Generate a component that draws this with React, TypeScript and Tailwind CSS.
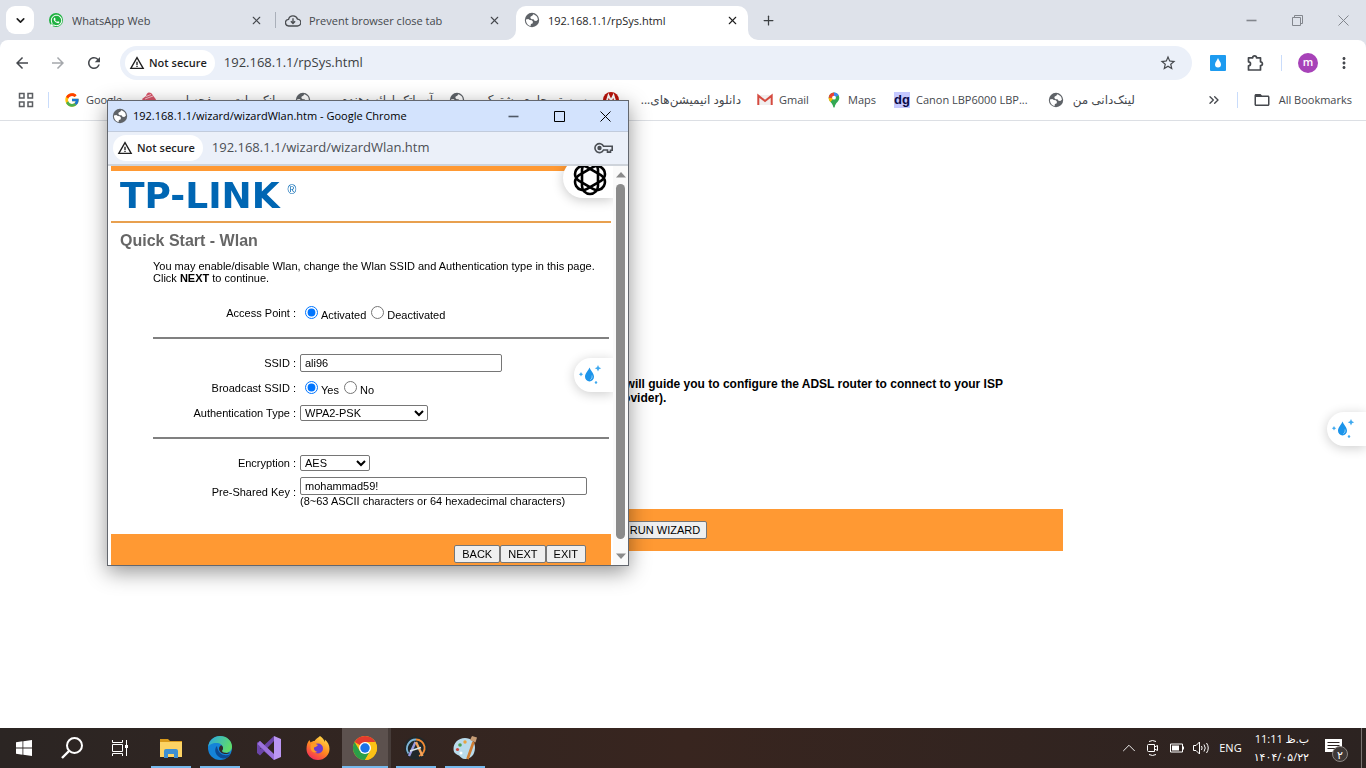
import type { ReactNode } from "react";
import { ChevronDown, ChevronUp, ChevronsRight, Plus, X } from "lucide-react";
import { FcGoogle } from "react-icons/fc";
import { FaWhatsapp } from "react-icons/fa";
import {
  MdArrowBack,
  MdArrowForward,
  MdFolderOpen,
  MdMoreVert,
  MdRefresh,
  MdStarBorder,
  MdWarningAmber,
} from "react-icons/md";

const uiFont = "font-['Open_Sans','DejaVu_Sans',sans-serif]";
const pageFont = "font-['Liberation_Sans',Arial,sans-serif]";

function GlobeIcon() {
  return (
    <svg width="16" height="16" viewBox="0 0 16 16" className="shrink-0" aria-hidden="true">
      <circle cx="8" cy="8" r="7.2" fill="#5f6368" />
      <path d="M9.2 2.2c1.8.4 3.400 1.600 4.200 3.300l.5 2.300-1.700 1.300-1.700-.3-1-1.500H7.600L6.300 6l.4-1.600 1.600-.6z" fill="#fff" />
      <path d="M1.900 7.400l2.400-.4 1.500 1 2 .3 1.200 1.400-.5 1.900-1.600.5-.3 1.900C3.900 13.600 1.900 10.600 1.900 7.400z" fill="#fff" />
    </svg>
  );
}

function CloudDownloadIcon() {
  return (
    <svg width="16" height="15" viewBox="0 0 18 16" fill="none" stroke="#4a4d51" strokeWidth="1.5" className="shrink-0" aria-hidden="true">
      <path d="M5 14.200H4.400A3.700 3.700 0 0 1 4 6.800 5.200 5.200 0 0 1 14 6.400a3.900 3.900 0 0 1-.2 7.800z" />
      <path d="M9 5.500v5.600M6.600 8.900 9 11.300l2.400-2.400" />
    </svg>
  );
}

function WhatsAppIcon() {
  return (
    <span className="flex size-4 shrink-0 items-center justify-center">
      <span className="flex size-[14px] items-center justify-center rounded-full bg-[#1fb141] text-white">
        <FaWhatsapp size={13} />
      </span>
    </span>
  );
}

function ExtensionIcon() {
  return (
    <svg width="18" height="18" viewBox="0 0 18 18" fill="none" stroke="currentColor" strokeWidth="1.700" strokeLinejoin="round" aria-hidden="true">
      <path d="M2.500 3.800H6.700a1.900 1.900 0 0 1 3.800 0H14.500v4a1.900 1.900 0 0 1 0 3.800v4.400H2.500v-4.200a2 2 0 0 0 0-4z" />
    </svg>
  );
}

function GmailIcon() {
  return (
    <svg width="16" height="16" viewBox="0 0 16 16" className="shrink-0" aria-hidden="true">
      <path d="M1 3h14v10H1z" fill="#f1efef" />
      <path d="M1.300 13V3.600L8 9l6.700-5.400V13" fill="none" stroke="#d54b40" strokeWidth="2" />
    </svg>
  );
}

function MapsIcon() {
  return (
    <svg width="16" height="16" viewBox="0 0 16 16" className="shrink-0" aria-hidden="true">
      <path d="M8 .4a5.300 5.300 0 0 1 5.300 5.300c0 3.700-3.900 5-4.500 9-.2 1.200-1.400 1.200-1.600 0-.6-4-4.500-5.300-4.500-9A5.300 5.300 0 0 1 8 .4z" fill="#34a853" />
      <path d="M2.700 5.700 8 5.700 4.300 10C3.300 8.700 2.700 7.400 2.700 5.700z" fill="#fbbc04" />
      <path d="M2.700 5.700A5.300 5.300 0 0 1 8 .4v5.300z" fill="#ea4335" />
      <path d="M8 .4a5.300 5.300 0 0 1 4.700 2.900L8 5.700z" fill="#4285f4" />
      <circle cx="8" cy="5.700" r="1.900" fill="#fff" />
    </svg>
  );
}

function RedBadge({ kind }: { kind: "bank" | "mark" }) {
  return (
    <svg width="16" height="16" viewBox="0 0 16 16" className="shrink-0" aria-hidden="true">
      {kind === "bank" ? (
        <>
          <path d="M8 .5c2 0 3 1.300 4 3l3 4-4 6H5L1 7l4-3c.5-2 1.500-3.500 3-3.500z" fill="#d9566b" />
          <path d="M5 4.500l5-2M4 7l8-3" stroke="#f4c3cb" strokeWidth="1" />
        </>
      ) : (
        <>
          <circle cx="8" cy="8" r="8" fill="#b8130b" />
          <path d="M3.500 10 5.500 3.500 8 8.500l2.500-5 2 6.500" fill="none" stroke="#fff" strokeWidth="1.800" />
        </>
      )}
    </svg>
  );
}

function DgIcon() {
  return (
    <span className={`${pageFont} flex size-4 shrink-0 items-center justify-center bg-[#c5c8ff] pb-[2px] text-[13px] leading-none font-bold text-[#0a0a46]`}>dg</span>
  );
}

function DropIcon() {
  return (
    <svg width="28" height="24" viewBox="0 0 28 24" aria-hidden="true">
      <path d="M12.500 4.500c1 3 4.500 5.800 4.500 9.300a4.500 4.700 0 0 1-9 0c0-3.500 3.500-6.300 4.500-9.300z" fill="#1c94ea" />
      <path d="M15 12.500c.4 2-.2 3.500-1.700 4.200" fill="none" stroke="#8fd0fa" strokeWidth="1" />
      <g fill="#3fa9ef">
        <path d="M21 2l1 2.200 2.200 1-2.200 1-1 2.200-1-2.200-2.200-1 2.200-1z" />
        <path d="M4 9l.8 1.400 1.400.8-1.400.8L4 13.400l-.8-1.400-1.400-.8 1.400-.8z" />
        <circle cx="19" cy="19.500" r="1.200" />
      </g>
    </svg>
  );
}

function KnotIcon() {
  return (
    <svg width="38" height="38" viewBox="0 0 38 38" fill="none" stroke="#000" strokeWidth="2.600" aria-hidden="true">
      <rect x="11" y="3" width="16" height="32" rx="8" />
      <rect x="11" y="3" width="16" height="32" rx="8" transform="rotate(60 19 19)" />
      <rect x="11" y="3" width="16" height="32" rx="8" transform="rotate(120 19 19)" />
    </svg>
  );
}

function KeyIcon() {
  return (
    <svg width="20" height="12" viewBox="0 0 20 12" fill="none" stroke="#4b4f55" strokeWidth="1.600" aria-hidden="true">
      <path d="M9.500 4.200H18.200v4h-1.700v1.900h-3V8H9.500a4.500 4.500 0 1 1 0-3.800z" />
      <circle cx="5.500" cy="6" r="1.400" fill="#4b4f55" />
    </svg>
  );
}

function WindowIcon({ kind }: { kind: "minimize" | "restore" | "maximize" | "close" }) {
  return (
    <svg width="11" height="11" viewBox="0 0 11 11" fill="none" stroke="currentColor" aria-hidden="true">
      {kind === "minimize" && <path d="M.5 5.500h10" strokeWidth="1.600" />}
      {kind === "restore" && <path d="M.5 2.500h8v8h-8zM2.500 2.500v-2h8v8h-2" />}
      {kind === "maximize" && <path d="M.5.5h10v10H.5z" />}
      {kind === "close" && <path d="M.5.5l10 10M10.500.5l-10 10" />}
    </svg>
  );
}

function Tab({ icon, title, active, className }: { icon: ReactNode; title: string; active?: boolean; className: string }) {
  return (
    <div className={`relative mt-[6px] flex h-[34px] items-center pr-2 pb-[6px] pl-2 ${className} ${active ? "rounded-t-[10px] bg-white text-[#1f1f1f]" : "text-[#45484d]"}`}>
      {active && (
        <>
          <svg width="10" height="10" viewBox="0 0 10 10" className="absolute bottom-0 -left-[10px]" aria-hidden="true">
            <path d="M10 0v10H0A10 10 0 0 0 10 0z" fill="#fff" />
          </svg>
          <svg width="10" height="10" viewBox="0 0 10 10" className="absolute -right-[10px] bottom-0" aria-hidden="true">
            <path d="M0 0v10h10A10 10 0 0 1 0 0z" fill="#fff" />
          </svg>
        </>
      )}
      {icon}
      <span className="ml-2 flex-1 truncate pt-[2px] text-[11px]">{title}</span>
      <button aria-label={`Close ${title}`} className="flex size-4 items-center justify-center">
        <X size={13} strokeWidth={2} />
      </button>
    </div>
  );
}

function SecurityChip() {
  return (
    <button className="flex h-[26px] items-center gap-1 rounded-full bg-white pr-2 pl-1 text-[#1f1f1f]">
      <MdWarningAmber size={16} />
      <span className="text-[11px] font-semibold">Not secure</span>
    </button>
  );
}

interface Bookmark {
  name: string;
  icon: ReactNode;
  width: string;
  rtl?: boolean;
}

const bookmarks: Bookmark[] = [
  { name: "Google", icon: <FcGoogle size={16} className="shrink-0" />, width: "w-[77px]" },
  { name: "بانک ملت - صفحه ا...", icon: <RedBadge kind="bank" />, width: "w-[154px]", rtl: true },
  { name: "آسیاتک ارائه دهنده", icon: <GlobeIcon />, width: "w-[154px]", rtl: true },
  { name: "سیستم جامع مشترک", icon: <GlobeIcon />, width: "w-[154px]", rtl: true },
  { name: "دانلود انیمیشن‌های...", icon: <RedBadge kind="mark" />, width: "w-[154px]", rtl: true },
  { name: "Gmail", icon: <GmailIcon />, width: "w-[69px]" },
  { name: "Maps", icon: <MapsIcon />, width: "w-[68px]" },
  { name: "Canon LBP6000 LBP...", icon: <DgIcon />, width: "w-[154px]" },
  { name: "لینک‌دانی من", icon: <GlobeIcon />, width: "w-[103px]", rtl: true },
];

function BrowserChrome() {
  return (
    <header className={`${uiFont} bg-[#dee2ea]`}>
      <div className="flex h-10">
        <button aria-label="Search tabs" className="mt-[6px] mr-[6px] ml-[6px] flex size-7 shrink-0 items-center justify-center rounded-[9px] bg-white text-[#1f1f1f]">
          <ChevronDown size={13} strokeWidth={3} />
        </button>
        <Tab className="w-[232px]" title="WhatsApp Web" icon={<WhatsAppIcon />} />
        <div className="mt-3 ml-[3px] h-4 w-px bg-[#aab0ba]" />
        <Tab className="ml-px w-[233px]" title="Prevent browser close tab" icon={<CloudDownloadIcon />} />
        <Tab className="ml-[6px] w-[232px]" title="192.168.1.1/rpSys.html" icon={<GlobeIcon />} active />
        <button aria-label="New tab" className="ml-3 flex w-4 items-center justify-center text-[#3c4043]">
          <Plus size={15} strokeWidth={2} />
        </button>
        <div className="ml-auto flex text-[#82868d]">
          <button aria-label="Minimize" className="flex w-[46px] items-center justify-center"><WindowIcon kind="minimize" /></button>
          <button aria-label="Restore" className="flex w-[46px] items-center justify-center"><WindowIcon kind="restore" /></button>
          <button aria-label="Close" className="flex w-[46px] items-center justify-center"><WindowIcon kind="close" /></button>
        </div>
      </div>

      <div className="flex h-[46px] items-center rounded-t-[8px] bg-white px-[13px] text-[#45484d]">
        <button aria-label="Back"><MdArrowBack size={18} /></button>
        <button aria-label="Forward" className="ml-[18px] text-[#a5a8ac]"><MdArrowForward size={18} /></button>
        <button aria-label="Reload" className="ml-[18px]"><MdRefresh size={18} /></button>
        <div className="ml-[17px] flex h-[34px] flex-1 items-center rounded-full bg-[#ebf0f9] pr-[15px] pl-[5px]">
          <SecurityChip />
          <input aria-label="Address" defaultValue="192.168.1.1/rpSys.html" className="ml-[9px] min-w-0 flex-1 bg-transparent text-[13px] text-[#3c4043] outline-none" />
          <button aria-label="Bookmark this tab"><MdStarBorder size={18} /></button>
        </div>
        <button aria-label="Writing assistant" className="ml-[18px] flex size-4 items-center justify-center rounded-[1px] bg-[#1d9bf0]">
          <svg width="8" height="10" viewBox="0 0 8 10" aria-hidden="true">
            <path d="M4 0c.6 2.200 3 4 3 6.500a3 3 0 0 1-6 0C1 4 3.400 2.200 4 0z" fill="#fff" />
          </svg>
        </button>
        <button aria-label="Extensions" className="ml-5"><ExtensionIcon /></button>
        <div className="ml-[17px] h-4 w-px bg-[#c9dcfb]" />
        <button aria-label="Profile" className="ml-4 flex size-5 items-center justify-center rounded-full bg-[#a742b8] pb-[2px] text-[11px] font-semibold text-white">m</button>
        <button aria-label="Menu" className="ml-[17px]"><MdMoreVert size={18} /></button>
      </div>

      <nav className="flex h-[35px] items-center overflow-hidden border-b border-[#dcdfe4] bg-white pb-[6px] pl-[18px] text-[11px] text-[#45484d]">
        <button aria-label="Apps" className="shrink-0">
          <svg width="16" height="16" viewBox="0 0 16 16" fill="none" stroke="#5b5e62" strokeWidth="1.500" aria-hidden="true">
            <path d="M1.500 1.500h4.500v4.500H1.500zM10 1.500h4.500v4.500H10zM1.500 10h4.500v4.500H1.500zM10 10h4.500v4.500H10z" />
          </svg>
        </button>
        <div className="mr-[15px] ml-[14px] h-4 w-px shrink-0 bg-[#c9dcfb]" />
        {bookmarks.map((b) => (
          <a key={b.name} href="#" className={`flex shrink-0 items-center ${b.width}`}>
            {b.icon}
            <span dir={b.rtl ? "rtl" : "ltr"} className={`mr-4 ml-[6px] flex-1 whitespace-nowrap ${b.rtl ? "text-xs" : ""}`}>{b.name}</span>
          </a>
        ))}
        <button aria-label="More bookmarks" className="ml-auto shrink-0"><ChevronsRight size={16} /></button>
        <div className="mx-[15px] h-4 w-px shrink-0 bg-[#c9dcfb]" />
        <a href="#" className="flex shrink-0 items-center gap-2 pr-[14px]">
          <MdFolderOpen size={18} />
          All Bookmarks
        </a>
      </nav>
    </header>
  );
}

function RouterPage() {
  return (
    <main className={`${pageFont} relative flex-1 overflow-hidden bg-white`}>
      <div className="mx-auto max-w-[760px] pt-64">
        <p className="pb-[104px] pl-[210px] text-[12px] leading-[14px] font-bold text-black">
          The Startup Wizard will guide you to configure the ADSL router to connect to your ISP
          <br />
          (Internet Service Provider).
        </p>
        <div className="flex h-[42px] items-center justify-center bg-[#ff9933] pr-9">
          <button className="h-[18px] w-[84px] rounded-[2px] border border-[#767676] bg-[#efefef] text-[11px] text-black">RUN WIZARD</button>
        </div>
      </div>
      <button aria-label="Writing assistant" className="absolute top-[291px] right-0 flex h-[34px] w-[39px] items-center rounded-l-full bg-white pl-[3px] shadow-[0_2px_12px_rgba(0,0,0,0.2)]">
        <DropIcon />
      </button>
    </main>
  );
}

function Row({ label, htmlFor, children }: { label: string; htmlFor?: string; children: ReactNode }) {
  return (
    <div className="flex h-[25px] items-center">
      <label htmlFor={htmlFor} className="w-[185px] text-right">{label} :</label>
      <div className="flex-1 pl-1">{children}</div>
    </div>
  );
}

function Radio({ name, label, checked }: { name: string; label: string; checked?: boolean }) {
  return (
    <label className="flex items-center">
      <input type="radio" name={name} defaultChecked={checked} className="mr-[3px] ml-[5px] size-[13px] accent-[#0075ff]" />
      <span className="pt-[5px]">{label}</span>
    </label>
  );
}

function WizardWindow() {
  const field = "rounded-[2px] border border-[#767676] bg-white text-[11px] text-black";
  const button = "h-[18px] rounded-[2px] border border-[#767676] bg-[#efefef] px-[7px] text-[11px] text-black";

  return (
    <section aria-label="Wizard window" className="fixed top-[100px] left-[107px] flex h-[466px] w-[522px] flex-col border border-[#63676e] bg-white shadow-[0_6px_20px_rgba(0,0,0,0.42)]">
      <div className={`${uiFont} flex h-[31px] items-center border-b border-[#c1cbdc] bg-[#d3e3fd] pl-1 text-[11px] text-black`}>
        <GlobeIcon />
        <h1 className="ml-[5px] flex-1 truncate">192.168.1.1/wizard/wizardWlan.htm - Google Chrome</h1>
        <button aria-label="Minimize window" className="flex w-[46px] justify-center text-[#4f5866]"><WindowIcon kind="minimize" /></button>
        <button aria-label="Maximize window" className="flex w-[46px] justify-center"><WindowIcon kind="maximize" /></button>
        <button aria-label="Close window" className="flex w-[46px] justify-center"><WindowIcon kind="close" /></button>
      </div>
      <div className={`${uiFont} flex h-[34px] items-center border-b-2 border-[#ced3da] bg-[#ebf0f9] pr-[14px] pl-[5px]`}>
        <SecurityChip />
        <input aria-label="Window address" defaultValue="192.168.1.1/wizard/wizardWlan.htm" className="ml-[9px] min-w-0 flex-1 bg-transparent text-[13px] text-[#4b4f55] outline-none" />
        <KeyIcon />
      </div>

      <div className="relative flex min-h-0 flex-1 overflow-hidden">
        <form className={`${pageFont} ml-[3px] flex w-[500px] flex-col text-[11px] leading-[12px] text-black`} onSubmit={(e) => e.preventDefault()}>
          <div className="h-[5px] shrink-0 bg-[#ff9933]" />
          <div className="flex h-[52px] shrink-0 items-center border-b-2 border-[#e8a04f] pl-[9px] text-[#0066b3]">
            <span className="font-['DejaVu_Sans',sans-serif] text-[36px] leading-none font-bold">TP-LINK</span>
            <span className="mb-3 ml-2 text-[12px] leading-none">®</span>
          </div>
          <h2 className="mt-2 ml-[9px] text-[16px] leading-[20px] font-bold text-[#666666]">Quick Start - Wlan</h2>
          <p className="mt-[9px] ml-[42px]">
            You may enable/disable Wlan, change the Wlan SSID and Authentication type in this page.
            <br />
            Click <b>NEXT</b> to continue.
          </p>

          <div className="mt-4">
            <Row label="Access Point">
              <div className="flex">
                <Radio name="ap" label="Activated" checked />
                <Radio name="ap" label="Deactivated" />
              </div>
            </Row>
          </div>
          <hr className="mt-3 mr-[2px] ml-[42px] border-t-2 border-[#808080]" />
          <div className="mt-[11px]">
            <Row label="SSID" htmlFor="ssid">
              <input id="ssid" defaultValue="ali96" className={`${field} block h-[18px] w-[202px] px-1`} />
            </Row>
            <Row label="Broadcast SSID">
              <div className="flex">
                <Radio name="broadcast" label="Yes" checked />
                <Radio name="broadcast" label="No" />
              </div>
            </Row>
            <Row label="Authentication Type" htmlFor="auth">
              <select id="auth" defaultValue="WPA2-PSK" className={`${field} block h-4 w-32`}>
                <option>WPA2-PSK</option>
              </select>
            </Row>
          </div>
          <hr className="mt-3 mr-[2px] ml-[42px] border-t-2 border-[#808080]" />
          <div className="mt-[11px]">
            <Row label="Encryption" htmlFor="enc">
              <select id="enc" defaultValue="AES" className={`${field} block h-4 w-[70px]`}>
                <option>AES</option>
              </select>
            </Row>
            <div className="flex items-center pt-[2px]">
              <label htmlFor="psk" className="w-[185px] text-right">Pre-Shared Key :</label>
              <div className="flex-1 pl-1">
                <input id="psk" defaultValue="mohammad59!" className={`${field} block h-[18px] w-[287px] px-1`} />
                <span className="block">(8~63 ASCII characters or 64 hexadecimal characters)</span>
              </div>
            </div>
          </div>
          <div className="mt-auto flex h-[31px] shrink-0 justify-end bg-[#ff9933] pt-[11px] pr-[25px]">
            <button className={button}>BACK</button>
            <button className={button}>NEXT</button>
            <button className={button}>EXIT</button>
          </div>
        </form>

        <div aria-hidden="true" className="ml-auto flex w-[15px] flex-col items-center justify-between bg-[#fafafa] py-[6px]">
          <svg width="10" height="6" viewBox="0 0 10 6"><path d="M5 0l5 5.500H0z" fill="#8b8b8b" /></svg>
          <span className="mt-[6px] mb-[14px] w-[9px] flex-1 rounded-full bg-[#8b8b8b]" />
          <svg width="10" height="6" viewBox="0 0 10 6"><path d="M0 .5h10L5 6z" fill="#8b8b8b" /></svg>
        </div>

        <div className="pointer-events-none absolute inset-y-0 right-[15px] w-20 overflow-hidden">
          <div className="absolute -top-2 right-0 flex h-10 w-[50px] items-center rounded-l-full bg-white pl-2 shadow-[0_2px_12px_rgba(0,0,0,0.22)]">
            <KnotIcon />
          </div>
          <div className="absolute top-[192px] right-0 flex h-[34px] w-[39px] items-center rounded-l-full bg-white pl-[3px] shadow-[0_2px_12px_rgba(0,0,0,0.2)]">
            <DropIcon />
          </div>
        </div>
      </div>
    </section>
  );
}

function ExplorerIcon() {
  return (
    <svg width="24" height="24" viewBox="0 0 24 24" aria-hidden="true">
      <path d="M1 3h8l2 2h12v16H1z" fill="#d99a1b" />
      <path d="M1 6h22v15H1z" fill="#fcd364" />
      <path d="M5 22v-7q0-2 2-2h10q2 0 2 2v7h-4v-4H9v4z" fill="#3d8fd1" />
    </svg>
  );
}

function EdgeIcon() {
  return (
    <svg width="26" height="26" viewBox="0 0 26 26" aria-hidden="true">
      <defs>
        <linearGradient id="edgeTop" x1="0" y1="0" x2="1" y2="0.4">
          <stop offset="0" stopColor="#2aa5e6" />
          <stop offset="1" stopColor="#5fdc6b" />
        </linearGradient>
      </defs>
      <circle cx="13" cy="13" r="12" fill="#1583d8" />
      <path d="M1.200 12C2 5 7 1 13 1c7 0 12 5 12 10.500 0 4-3 6.300-6.500 6.300-2.500 0-4-1-3.500-2 .8-1 1-1.700 1-2.800C16 10 13 8 9.500 8 5 8 2 10 1.200 12z" fill="url(#edgeTop)" />
      <path d="M10 11c-3.500 3-2 11 6 12.500 3.500.3 6-1.500 7.500-4.500C18 22 11 19.500 10 11z" fill="#0c4a94" />
      <path d="M15 15.800c.8-1 1-1.700 1-2.800 0-1-.5-2-1.500-2.800-2.500.5-3.500 4-1 6.800 2.500 2.500 7 2.800 10 .6-1.500.5-8.500 1-8.500-1.800z" fill="#322926" />
    </svg>
  );
}

function VisualStudioIcon() {
  return (
    <svg width="26" height="26" viewBox="0 0 26 26" aria-hidden="true">
      <path d="M1 8l3-2 14 14v5L1 10z" fill="#7a52b8" />
      <path d="M1 8v10l3 2.500L18 6V1L4 14V6z" fill="#6b45a8" />
      <path d="M4 6l14 13v6L1.500 9z" fill="#9b72dc" />
      <path d="M18 1l7 3v18l-7 3z" fill="#bb97f3" />
    </svg>
  );
}

function FirefoxIcon() {
  return (
    <svg width="26" height="26" viewBox="0 0 26 26" aria-hidden="true">
      <defs>
        <linearGradient id="fox" x1="0.8" y1="0" x2="0.2" y2="1">
          <stop offset="0" stopColor="#ffe14b" />
          <stop offset="0.5" stopColor="#ff8a1f" />
          <stop offset="1" stopColor="#f2245e" />
        </linearGradient>
      </defs>
      <path d="M15 1c3 2 4 4 5 6 0-1 0-1.500-.2-2.500C23 7 24.500 10 24.500 14c0 6-5 11-11.500 11S1.500 20 1.500 14c0-4 1-7 3-9 .2 1 .5 1.800 1.200 2.500C7 6.500 8 6 9.500 6 11 4 13 2.500 15 1z" fill="url(#fox)" />
      <circle cx="13" cy="13.500" r="5" fill="#6b3bd0" />
      <path d="M6 9c3-1 5 0 7 1-1 1.800-3 2-4 2.500-.5 2 1 4 3.500 4.500-3 1.500-7-.5-7-4.500z" fill="#ff9a26" />
    </svg>
  );
}

function ChromeIcon() {
  return (
    <svg width="26" height="26" viewBox="0 0 26 26" aria-hidden="true">
      <circle cx="13" cy="13" r="12" fill="#fbc116" />
      <path d="M13 13 2.600 7A12 12 0 0 1 23.400 7z" fill="#e33b2e" />
      <path d="M2.600 7A12 12 0 0 0 13 25l5.200-9L13 13 7.800 16z" fill="#2b9f48" />
      <path d="M13 7h10.400A12 12 0 0 1 13 25l5.200-9z" fill="#fbc116" />
      <circle cx="13" cy="13" r="6" fill="#fff" />
      <circle cx="13" cy="13" r="4.700" fill="#1a73e8" />
    </svg>
  );
}

function OrbIcon() {
  return (
    <svg width="24" height="24" viewBox="0 0 24 24" fill="none" aria-hidden="true">
      <circle cx="12" cy="12" r="11.500" fill="#20282b" />
      <path d="M4.500 17.500A9 9 0 0 1 12 3.500" stroke="#7fb6d8" strokeWidth="1.800" />
      <path d="M12 3.500a8.500 8.500 0 0 1 3 16.500" stroke="#f08a34" strokeWidth="1.800" />
      <path d="M5 20 11.500 6" stroke="#9a9be0" strokeWidth="2.400" />
      <path d="M12 6l6.500 14" stroke="#f3a45c" strokeWidth="2.400" />
      <path d="M6 15l11-3.500" stroke="#d9e6ea" strokeWidth="1.500" />
    </svg>
  );
}

function PaintIcon() {
  return (
    <svg width="26" height="26" viewBox="0 0 26 26" aria-hidden="true">
      <path d="M13 3c6 0 10 4 10 9 0 4-1 11-9 12-4 .5-5-2-7-3.500C4 19 1.500 18 1.500 14 1.500 8 6 3 13 3z" fill="#b9dbec" />
      <circle cx="8" cy="10" r="1.800" fill="#4aa053" />
      <circle cx="13" cy="7" r="1.700" fill="#e9a33c" />
      <circle cx="5.500" cy="14.500" r="1.600" fill="#c9453c" />
      <circle cx="9" cy="18" r="1.500" fill="#fff" />
      <path d="M21.500 7 15.500 24" stroke="#cf7d33" strokeWidth="2.600" />
      <path d="M18 5l2-4 5 1.500-1.500 5z" fill="#c79d76" />
    </svg>
  );
}

const apps = [
  { name: "File Explorer", icon: <ExplorerIcon />, state: "running" },
  { name: "Edge", icon: <EdgeIcon />, state: "running" },
  { name: "Visual Studio", icon: <VisualStudioIcon />, state: "idle" },
  { name: "Firefox", icon: <FirefoxIcon />, state: "idle" },
  { name: "Chrome", icon: <ChromeIcon />, state: "active" },
  { name: "Arena", icon: <OrbIcon />, state: "running" },
  { name: "Paint", icon: <PaintIcon />, state: "running" },
];

function Taskbar() {
  return (
    <footer className={`${uiFont} flex h-10 shrink-0 items-center bg-gradient-to-r from-[#2b2523] via-[#38251f] to-[#2c2321] text-white`}>
      <button aria-label="Start" className="flex w-12 justify-center">
        <svg width="16" height="16" viewBox="0 0 16 16" fill="#fff" aria-hidden="true">
          <path d="M0 2.200 6.500 1.300v6.200H0zM7.300 1.200 16 0v7.500H7.300zM0 8.400h6.500v6.300L0 13.800zM7.300 8.400H16V16l-8.700-1.200z" />
        </svg>
      </button>
      <button aria-label="Search" className="flex w-12 justify-center">
        <svg width="24" height="24" viewBox="0 0 24 24" fill="none" stroke="#fff" strokeWidth="2" aria-hidden="true">
          <circle cx="14.500" cy="9.500" r="7.500" />
          <path d="M9 15l-7 7" strokeWidth="2.400" />
        </svg>
      </button>
      <button aria-label="Task view" className="mr-[2px] flex w-12 justify-center">
        <svg width="16" height="16" viewBox="0 0 16 16" fill="none" stroke="#fff" aria-hidden="true">
          <path d="M.5 0v2.500h10V0M.5 16v-2.500h10V16M.5 4.500h10v7H.5zM14.500 0v16" />
          <path d="M13 5h3v3h-3z" fill="#fff" stroke="none" />
        </svg>
      </button>
      {apps.map((app) => (
        <button key={app.name} aria-label={app.name} className={`flex h-10 w-[49px] flex-col items-center ${app.state === "active" ? "border-r-3 border-[#463c39] bg-[#5c514e]" : ""}`}>
          <span className="flex h-[38px] items-center pt-[2px]">{app.icon}</span>
          {app.state === "running" && <span className="h-[2px] w-10 bg-[#76b9ed]" />}
          {app.state === "active" && <span className="h-[2px] w-full bg-[#76b9ed]" />}
        </button>
      ))}

      <div className="ml-auto flex h-full items-center">
        <button aria-label="Show hidden icons" className="flex w-6 justify-center"><ChevronUp size={22} strokeWidth={1} /></button>
        <button aria-label="Meet now" className="flex w-6 justify-center">
          <svg width="14" height="18" viewBox="0 0 14 18" fill="none" stroke="#fff" aria-hidden="true">
            <path d="M2.500 5.500h6v7h-6q-1 0-1-1v-5q0-1 1-1zM8.500 8l3-1.500v5l-3-1.500M3 2.500q3.500-2 7 0M3 15.500q3.500 2 7 0" />
          </svg>
        </button>
        <button aria-label="Battery" className="flex w-6 justify-center">
          <svg width="15" height="10" viewBox="0 0 15 10" fill="none" stroke="#fff" aria-hidden="true">
            <path d="M.5 1h12v8H.5zM13.500 3.500v3" />
            <path d="M2 2.500h7v5H2z" fill="#fff" stroke="none" />
          </svg>
        </button>
        <button aria-label="Volume" className="flex w-6 justify-center">
          <svg width="17" height="14" viewBox="0 0 17 14" fill="none" stroke="#fff" aria-hidden="true">
            <path d="M.5 4.500h2.500l3.500-3.500v12L3 9.500H.5zM8.500 5q1.200 2 0 4M11 3.500q2.500 3.500 0 7M13.500 2q3.500 5 0 10" />
          </svg>
        </button>
        <span className="ml-[6px] text-[11px]">ENG</span>
        <div className="ml-3 text-right text-[11px] leading-[18px]">
          <div>11:11 ب.ظ</div>
          <div>۱۴۰۴/۰۵/۲۲</div>
        </div>
        <button aria-label="Notifications" className="relative ml-4 h-6 w-8">
          <svg width="17" height="17" viewBox="0 0 17 17" className="absolute top-[3px] left-0" aria-hidden="true">
            <path d="M0 0h17v13h-4l-2 4-2-4H0z" fill="#fff" />
            <path d="M2.500 3.500h12M2.500 6.500h12M2.500 9.500h8" stroke="#2c2321" />
          </svg>
          <span className="absolute top-[10px] left-[7px] flex size-4 items-center justify-center rounded-full border border-[#8b8582] bg-[#3f3836] text-[11px] leading-none">۲</span>
        </button>
        <div className="mr-1 ml-1 h-full w-px bg-[#7a7371]" />
      </div>
    </footer>
  );
}

export default function App() {
  return (
    <div className="flex h-screen flex-col overflow-hidden bg-white">
      <BrowserChrome />
      <RouterPage />
      <Taskbar />
      <WizardWindow />
    </div>
  );
}
